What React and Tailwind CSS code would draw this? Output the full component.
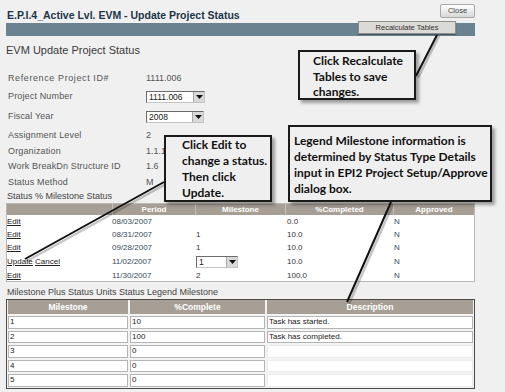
import React from "react";

const Arrow = () => (
  <svg width="7" height="4" viewBox="0 0 7 4">
    <path d="M0 0h7L3.5 4z" fill="#111" />
  </svg>
);

const Select = ({ value, className }) => (
  <div
    className={`flex h-[12px] border border-t-[#6b6b6b] border-l-[#6b6b6b] border-r-[#c4c4c4] border-b-[#c4c4c4] bg-white ${className}`}
  >
    <span className="flex-1 pl-[2px] text-[8.5px] leading-[10px] text-[#1a1a1a]">{value}</span>
    <span className="flex w-[11px] items-center justify-center border-l border-[#a8a8a8] bg-[#d9d9d9]">
      <Arrow />
    </span>
  </div>
);

const info = [
  { label: "Reference Project ID#", value: "1111.006", row: "h-[16px]", wide: true },
  { label: "Project Number", select: "1111.006", sw: "w-[59px]", row: "h-[19px]" },
  { label: "Fiscal Year", select: "2008", sw: "w-[58px]", row: "h-[21px]" },
  { label: "Assignment Level", value: "2", row: "h-[17px]" },
  { label: "Organization", value: "1.1.1.10", row: "h-[15px]" },
  { label: "Work BreakDn Structure ID", value: "1.6", row: "h-[15px]" },
  { label: "Status Method", value: "M", row: "h-[17px]" },
];

const statusRows = [
  { action: "edit", period: "08/03/2007", milestone: "", pct: "0.0", h: "h-[13px]" },
  { action: "edit", period: "08/31/2007", milestone: "1", pct: "10.0", h: "h-[13px]" },
  { action: "edit", period: "09/28/2007", milestone: "1", pct: "10.0", h: "h-[13px]" },
  { action: "update", period: "11/02/2007", milestone: "1", pct: "10.0", h: "h-[16px]" },
  { action: "edit", period: "11/30/2007", milestone: "2", pct: "100.0", h: "h-[11px]" },
];

const legend = [
  { m: "1", p: "10", d: "Task has started." },
  { m: "2", p: "100", d: "Task has completed." },
  { m: "3", p: "0", d: "" },
  { m: "4", p: "0", d: "" },
  { m: "5", p: "0", d: "" },
];

const statusCols = "grid grid-cols-[105px_83px_90px_108px_1fr]";
const legendCols = "grid grid-cols-[120px_135px_206px] gap-x-[2px]";

export default function App() {
  return (
    <div className="relative h-[392px] w-[505px] overflow-hidden bg-[#f0f0f0] font-['Liberation_Sans',Arial,sans-serif]">
      <div className="ml-[6px] w-[469px] pt-[4px]">
        {/* Title row */}
        <div className="flex h-[19px] items-start justify-between">
          <h1 className="mt-[5px] pl-[1px] text-[10.5px] font-bold leading-[12px] text-[#1c3647]">
            E.P.I.4_Active Lvl. EVM - Update Project Status
          </h1>
          <button className="flex h-[14px] w-[35px] items-center justify-center rounded-[2px] border border-[#a9a9a9] bg-linear-to-b from-white to-[#d8d8d8] text-[7.5px] text-[#444]">
            Close
          </button>
        </div>

        {/* Toolbar */}
        <div className="flex h-[13px] justify-end bg-[#6b8290] pr-[19px]">
          <button className="-mt-[2px] h-[13px] w-[98px] border border-[#8e8e8e] bg-[#dcdad7] text-[7.5px] leading-[11px] text-[#333] shadow-[0_1px_1px_rgba(0,0,0,0.3)]">
            Recalculate Tables
          </button>
        </div>

        <h2 className="mt-[6px] text-[11px] leading-[16px] text-[#3a3a3a]">EVM Update Project Status</h2>

        {/* Project info */}
        <div className="mt-[13px] text-[9px] text-[#555]">
          {info.map((r) => (
            <div key={r.label} className={`flex items-center ${r.row}`}>
              <span className={`w-[140px] pl-[2px] ${r.wide ? "tracking-[0.6px]" : "tracking-[0.15px]"}`}>{r.label}</span>
              {r.select ? <Select value={r.select} className={r.sw} /> : <span>{r.value}</span>}
            </div>
          ))}
          <div className="flex h-[12px] items-center pl-[1px] text-[#444]">Status % Milestone Status</div>
        </div>

        {/* Status table */}
        <div className="border border-[#b9b9b9] bg-white text-[8px]">
          <div className={`${statusCols} h-[11px] bg-[#a79f96] text-center font-bold leading-[11px] text-white`}>
            <span />
            <span className="border-l border-[#c6c0b9]">Period</span>
            <span className="border-l border-[#c6c0b9]">Milestone</span>
            <span className="border-l border-[#c6c0b9]">%Completed</span>
            <span className="border-l border-[#c6c0b9]">Approved</span>
          </div>
          {statusRows.map((r) => (
            <div key={r.period} className={`${statusCols} items-center ${r.h}`}>
              <span className="text-[#222]">
                {r.action === "edit" ? (
                  <a className="underline">Edit</a>
                ) : (
                  <>
                    <a className="underline">Update</a> <a className="underline">Cancel</a>
                  </>
                )}
              </span>
              <span className="text-[#33495a]">{r.period}</span>
              <span className="pl-[1px] text-[#333]">
                {r.action === "update" ? <Select value={r.milestone} className="w-[42px]" /> : r.milestone}
              </span>
              <span className="pl-[2px] text-[#333]">{r.pct}</span>
              <span className="pl-[1px] text-[#33495a]">N</span>
            </div>
          ))}
        </div>

        <div className="h-[17px] pl-[1px] pt-[4px] text-[9px] leading-[12px] text-[#444]">
          Milestone Plus Status Units Status Legend Milestone
        </div>

        {/* Legend table */}
        <div className="flex flex-col gap-y-[2px] border border-[#4a4a4a] bg-[#f3f3f3] px-[1px] pb-[1.5px] text-[8px]">
          <div className={`${legendCols} h-[14px] text-center text-[8.5px] font-bold leading-[14px] text-white`}>
            <span className="bg-[#a79f96]">Milestone</span>
            <span className="bg-[#a79f96]">%Complete</span>
            <span className="bg-[#a79f96]">Description</span>
          </div>
          {legend.map((r) => (
            <div key={r.m} className={`${legendCols} h-[12.5px]`}>
              <span className="border border-[#b4b4b4] bg-white pl-[1px] leading-[10.5px] text-[#222]">{r.m}</span>
              <span className="border border-[#b4b4b4] bg-white pl-[1px] leading-[10.5px] text-[#222]">{r.p}</span>
              <span
                className={`border bg-white pl-[1px] leading-[10.5px] text-[#222] ${r.d ? "border-[#b4b4b4]" : "border-[#ececec]"}`}
              >
                {r.d}
              </span>
            </div>
          ))}
        </div>
      </div>

      {/* Callout pointers */}
      <svg className="pointer-events-none absolute inset-0" width="505" height="392">
        <g stroke="rgba(0,0,0,0.22)" strokeWidth="2.5">
          <line x1="439" y1="36" x2="418" y2="78" />
          <line x1="166" y1="184" x2="27" y2="261" />
          <line x1="393" y1="204" x2="349" y2="304" />
        </g>
        <g stroke="#111" strokeWidth="2">
          <line x1="437" y1="35" x2="416" y2="76" />
          <line x1="164" y1="182" x2="25" y2="259" />
          <line x1="391" y1="202" x2="347" y2="302" />
        </g>
      </svg>

      {/* Callouts */}
      <div className="absolute left-[298px] top-[50px] h-[50px] w-[118px] border-2 border-[#1a1a1a] bg-[#efefef] pl-[13px] pt-[1px] font-['Lato',sans-serif] text-[12px] font-bold leading-[15.5px] text-[#111] shadow-[3px_3px_3px_rgba(0,0,0,0.35)]">
        <p>Click Recalculate</p>
        <p>Tables to save</p>
        <p>changes.</p>
      </div>
      <div className="absolute left-[164px] top-[135px] h-[67px] w-[108px] border-2 border-[#1a1a1a] bg-[#efefef] pl-[16px] font-['Lato',sans-serif] text-[12px] font-bold leading-[16px] text-[#111] shadow-[3px_3px_3px_rgba(0,0,0,0.35)]">
        <p>Click Edit to</p>
        <p>change a status.</p>
        <p>Then click</p>
        <p>Update.</p>
      </div>
      <div className="absolute left-[288px] top-[125px] h-[77px] w-[204px] border-2 border-[#1a1a1a] bg-[#efefef] pl-[4px] pt-[6px] font-['Lato',sans-serif] text-[12px] font-bold leading-[16px] text-[#111] shadow-[3px_3px_3px_rgba(0,0,0,0.35)]">
        <p className="whitespace-nowrap">Legend Milestone information is</p>
        <p className="whitespace-nowrap">determined by Status Type Details</p>
        <p className="whitespace-nowrap">input in EPI2 Project Setup/Approve</p>
        <p>dialog box.</p>
      </div>
    </div>
  );
}
